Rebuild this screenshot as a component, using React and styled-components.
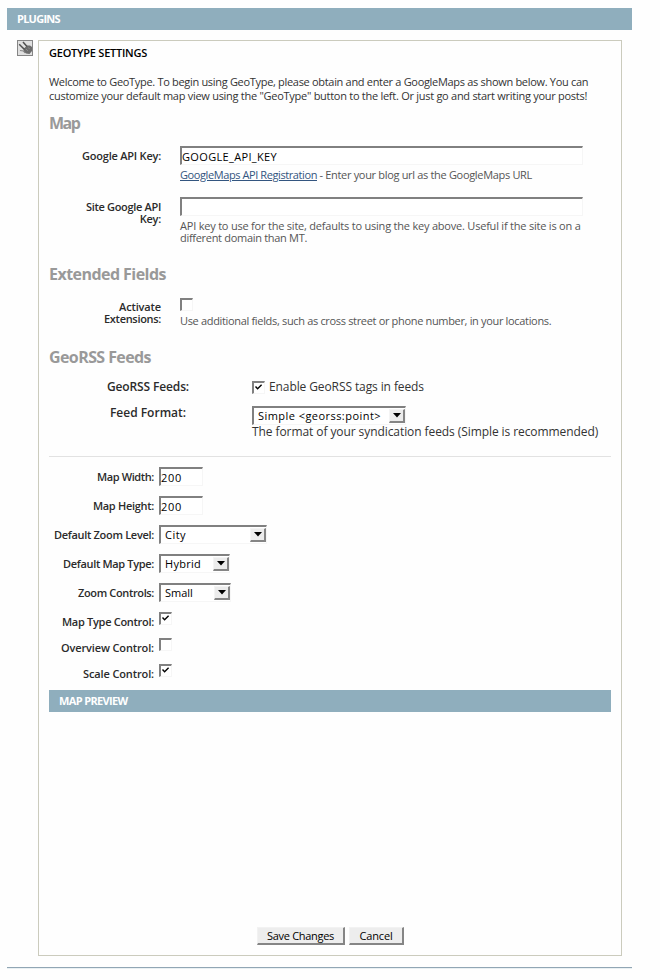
import React from 'react';
import styled, { createGlobalStyle } from 'styled-components';

const GlobalStyle = createGlobalStyle`
  *, *::before, *::after { box-sizing: border-box; }
  body { margin: 0; background: #fff; }
`;

const Page = styled.main`
  width: 660px;
  height: 980px;
  padding: 8px 28px 0 7px;
  overflow: hidden;
  background: #fefefe;
  color: #333;
  font: 11px/12px "Open Sans", "Trebuchet MS", sans-serif;
`;

const Text = styled.span`
  letter-spacing: ${(p) => p.$track || 0}px;
  white-space: pre;
`;

const Bar = styled.div`
  height: 22px;
  padding-left: 10px;
  background: #8faebd;
  color: #fff;
  font-weight: 700;
  line-height: 22px;
`;

const Columns = styled.div`
  display: grid;
  grid-template-columns: 31px 584px;
  height: 938px;
  padding-top: 10px;
  border-bottom: 1px solid #91a6b4;
  box-shadow: 0 1px 0 #e9f0f3;
`;

const PluginIcon = styled.svg`
  display: block;
  width: 16px;
  height: 16px;
  margin-left: 10px;
`;

const Panel = styled.section`
  display: flex;
  flex-direction: column;
  height: 916px;
  padding: 5px 10px 10px;
  border: 1px solid #cbcbbd;
`;

const Title = styled.h1`
  margin: 0 0 15px;
  color: #000;
  font-size: 11px;
  font-weight: 600;
  line-height: 14px;
`;

const Intro = styled.p`
  display: flex;
  flex-direction: column;
  margin: 0;
  line-height: 14px;
`;

const Heading = styled.h2`
  margin: ${(p) => p.$top}px 0 0;
  color: #999;
  font-size: 16px;
  font-weight: 700;
  line-height: 20px;
`;

const Field = styled.div`
  display: grid;
  grid-template-columns: 112px 1fr;
  column-gap: 19px;
  height: ${(p) => p.$height}px;
  margin-top: ${(p) => p.$top}px;
`;

const Label = styled.label`
  display: flex;
  flex-direction: column;
  align-items: flex-end;
  padding-top: ${(p) => p.$drop || 0}px;
  color: #2b2b2b;
  font-weight: 600;
`;

const Help = styled.div`
  display: flex;
  flex-direction: ${(p) => (p.$inline ? 'row' : 'column')};
  margin-top: ${(p) => p.$top}px;
  color: #555;
`;

const Link = styled.a`
  color: #33557f;
  text-decoration: underline;
  text-underline-offset: 1px;
  white-space: pre;
`;

const sunken = `
  border: solid;
  border-width: 2px 1px 1px 2px;
  border-color: #808080 #f6f6f6 #f6f6f6 #808080;
  background: #fff;
  color: #000;
`;

const Input = styled.input`
  ${sunken}
  display: block;
  width: ${(p) => p.$width}px;
  height: 19px;
  padding: 0;
  border-radius: 0;
  outline: 0;
  font: 11px/16px "Open Sans", "Lucida Grande", sans-serif;
  letter-spacing: ${(p) => p.$track || 0}px;
`;

const SelectBox = styled.div`
  ${sunken}
  display: flex;
  justify-content: space-between;
  width: ${(p) => p.$width}px;
  height: 19px;
  padding: 0 0 0 4px;
  font: 11px/15px "Open Sans", "Lucida Grande", sans-serif;
`;

const Arrow = styled.span`
  display: flex;
  align-items: center;
  justify-content: center;
  width: 16px;
  height: 14px;
  margin-top: 1px;
  border: solid;
  border-width: 1px 2px 2px 1px;
  border-color: #f4f4f4 #858585 #858585 #f4f4f4;
  background: #ececec;
`;

const Check = styled.span`
  ${sunken}
  display: block;
  flex: none;
  width: 13px;
  height: 13px;
`;

const Mark = styled.svg`
  display: block;
  width: 9px;
  height: 9px;
`;

const Rows = styled.div`
  flex: none;
  padding-top: 13px;
`;

const FeedRow = styled.div`
  display: grid;
  grid-template-columns: 198px 1fr;
  column-gap: 5px;
  height: ${(p) => p.$height}px;
  font-size: 12px;
  line-height: 14px;
`;

const FeedLabel = styled.div`
  color: #2b2b2b;
  font-weight: 600;
  text-align: center;
`;

const FeedText = styled.span`
  margin-top: -1px;
`;

const CheckLine = styled.div`
  display: flex;
  gap: 4px;
  padding-top: 1px;
`;

const Rule = styled.hr`
  width: 100%;
  height: 1px;
  margin: 0 0 10px;
  border: 0;
  flex: none;
  background: #e2e2e2;
`;

const MapRow = styled.div`
  display: grid;
  grid-template-columns: 105px 1fr;
  column-gap: 5px;
  flex: none;
  height: ${(p) => p.$height}px;
`;

const Preview = styled.div`
  flex: 1;
`;

const Actions = styled.div`
  display: flex;
  gap: 4px;
  padding-left: 208px;
`;

const Button = styled.button`
  width: ${(p) => p.$width}px;
  height: 18px;
  padding: 0;
  border: solid;
  border-width: 1px 2px 2px 1px;
  border-color: #f2f2f2 #858585 #858585 #f2f2f2;
  border-radius: 0;
  background: #ededed;
  color: #000;
  font: 11px/15px "Open Sans", "Lucida Grande", sans-serif;
`;

const CheckBox = ({ checked }) => (
  <Check role="checkbox" aria-checked={!!checked}>
    {checked && (
      <Mark viewBox="0 0 9 9">
        <path d="M1.5 3.5 L3.6 5.8 L7.6 1.8" fill="none" stroke="#000" strokeWidth="1.4" />
      </Mark>
    )}
  </Check>
);

const Select = ({ width, track, children }) => (
  <SelectBox $width={width} role="combobox">
    <Text $track={track}>{children}</Text>
    <Arrow>
      <svg width="8" height="5" viewBox="0 0 8 5"><path d="M0 0H8L4 4.5Z" fill="#000" /></svg>
    </Arrow>
  </SelectBox>
);

const mapSettings = [
  { label: 'Map Width:', track: -0.39, height: 29, value: '200' },
  { label: 'Map Height:', track: -0.3, height: 29, value: '200' },
  { label: 'Default Zoom Level:', track: -0.3, height: 29, option: 'City', width: 108, optionTrack: 0.47 },
  { label: 'Default Map Type:', track: -0.33, height: 29, option: 'Hybrid', width: 71, optionTrack: 0.27 },
  { label: 'Zoom Controls:', track: -0.36, height: 29, option: 'Small', width: 72 },
  { label: 'Map Type Control:', track: -0.29, height: 26, checked: true },
  { label: 'Overview Control:', track: -0.13, height: 26, checked: false },
  { label: 'Scale Control:', track: -0.12, height: 26, checked: true },
];

export default function App() {
  return (
    <Page>
      <GlobalStyle />
      <Bar><Text $track={-0.75}>PLUGINS</Text></Bar>
      <Columns>
        <PluginIcon viewBox="0 0 16 16">
          <rect x=".5" y=".5" width="15" height="15" fill="#e0e0e0" stroke="#858585" />
          <path d="M7 8.5 10 5.5 13 5.5 15 7V11L12.5 14 9 13.5 6.5 11.5Z" fill="#6c6c6c" />
          <path d="M2.2 4.2 7.5 9.5M6 2 10 6.5" stroke="#505050" strokeWidth="1.5" fill="none" />
          <path d="M3 10.5 6.5 11 8 13" stroke="#888" strokeWidth="1.2" fill="none" />
          <path d="M9 9 11 11M11.5 7.5 12.5 9" stroke="#999" strokeWidth=".7" />
        </PluginIcon>
        <Panel>
          <Title><Text $track={-0.24}>GEOTYPE SETTINGS</Text></Title>
          <Intro>
            <Text $track={-0.31}>Welcome to GeoType. To begin using GeoType, please obtain and enter a GoogleMaps as shown below. You can</Text>
            <Text $track={-0.273}>customize your default map view using the "GeoType" button to the left. Or just go and start writing your posts!</Text>
          </Intro>

          <Heading $top={10}><Text $track={-1.5}>Map</Text></Heading>
          <Field $top={13} $height={51}>
            <Label $drop={4}><Text $track={-0.22}>Google API Key:</Text></Label>
            <div>
              <Input $width={403} $track={0.34} defaultValue="GOOGLE_API_KEY" />
              <Help $top={4} $inline>
                <Link href="#"><Text $track={-0.41}>GoogleMaps API Registration</Text></Link>
                <Text $track={-0.32}> - Enter your blog url as the GoogleMaps URL</Text>
              </Help>
            </div>
          </Field>
          <Field $top={0} $height={48}>
            <Label $drop={4}>
              <Text $track={-0.32}>Site Google API</Text>
              <Text $track={-0.25}>Key:</Text>
            </Label>
            <div>
              <Input $width={403} />
              <Help $top={4}>
                <Text $track={-0.21}>API key to use for the site, defaults to using the key above. Useful if the site is on a</Text>
                <Text $track={-0.3}>different domain than MT.</Text>
              </Help>
            </div>
          </Field>

          <Heading $top={19}><Text $track={-0.54}>Extended Fields</Text></Heading>
          <Field $top={14} $height={30}>
            <Label $drop={3}>
              <Text $track={-0.14}>Activate</Text>
              <Text $track={-0.31}>Extensions:</Text>
            </Label>
            <div>
              <CheckBox />
              <Help $top={4}>
                <Text $track={-0.33}>Use additional fields, such as cross street or phone number, in your locations.</Text>
              </Help>
            </div>
          </Field>

          <Heading $top={19}><Text $track={-0.59}>GeoRSS Feeds</Text></Heading>
          <Rows>
            <FeedRow $height={26}>
              <FeedLabel><Text $track={-0.13}>GeoRSS Feeds:</Text></FeedLabel>
              <CheckLine>
                <CheckBox checked />
                <FeedText><Text $track={-0.1}>Enable GeoRSS tags in feeds</Text></FeedText>
              </CheckLine>
            </FeedRow>
            <FeedRow $height={50}>
              <FeedLabel><Text>Feed Format:</Text></FeedLabel>
              <div>
                <Select width={154} track={0.45}>{'Simple <georss:point>'}</Select>
                <Text $track={-0.08}>The format of your syndication feeds (Simple is recommended)</Text>
              </div>
            </FeedRow>
          </Rows>
          <Rule />

          {mapSettings.map((s) => (
            <MapRow key={s.label} $height={s.height}>
              <Label $drop={4}><Text $track={s.track}>{s.label}</Text></Label>
              {s.value && <Input $width={44} $track={0.7} defaultValue={s.value} />}
              {s.option && <Select width={s.width} track={s.optionTrack}>{s.option}</Select>}
              {s.checked !== undefined && <CheckBox checked={s.checked} />}
            </MapRow>
          ))}
          <Bar><Text $track={-0.65}>MAP PREVIEW</Text></Bar>
          <Preview />
          <Actions>
            <Button $width={88}><Text $track={-0.3}>Save Changes</Text></Button>
            <Button $width={55}><Text $track={-0.17}>Cancel</Text></Button>
          </Actions>
        </Panel>
      </Columns>
    </Page>
  );
}
